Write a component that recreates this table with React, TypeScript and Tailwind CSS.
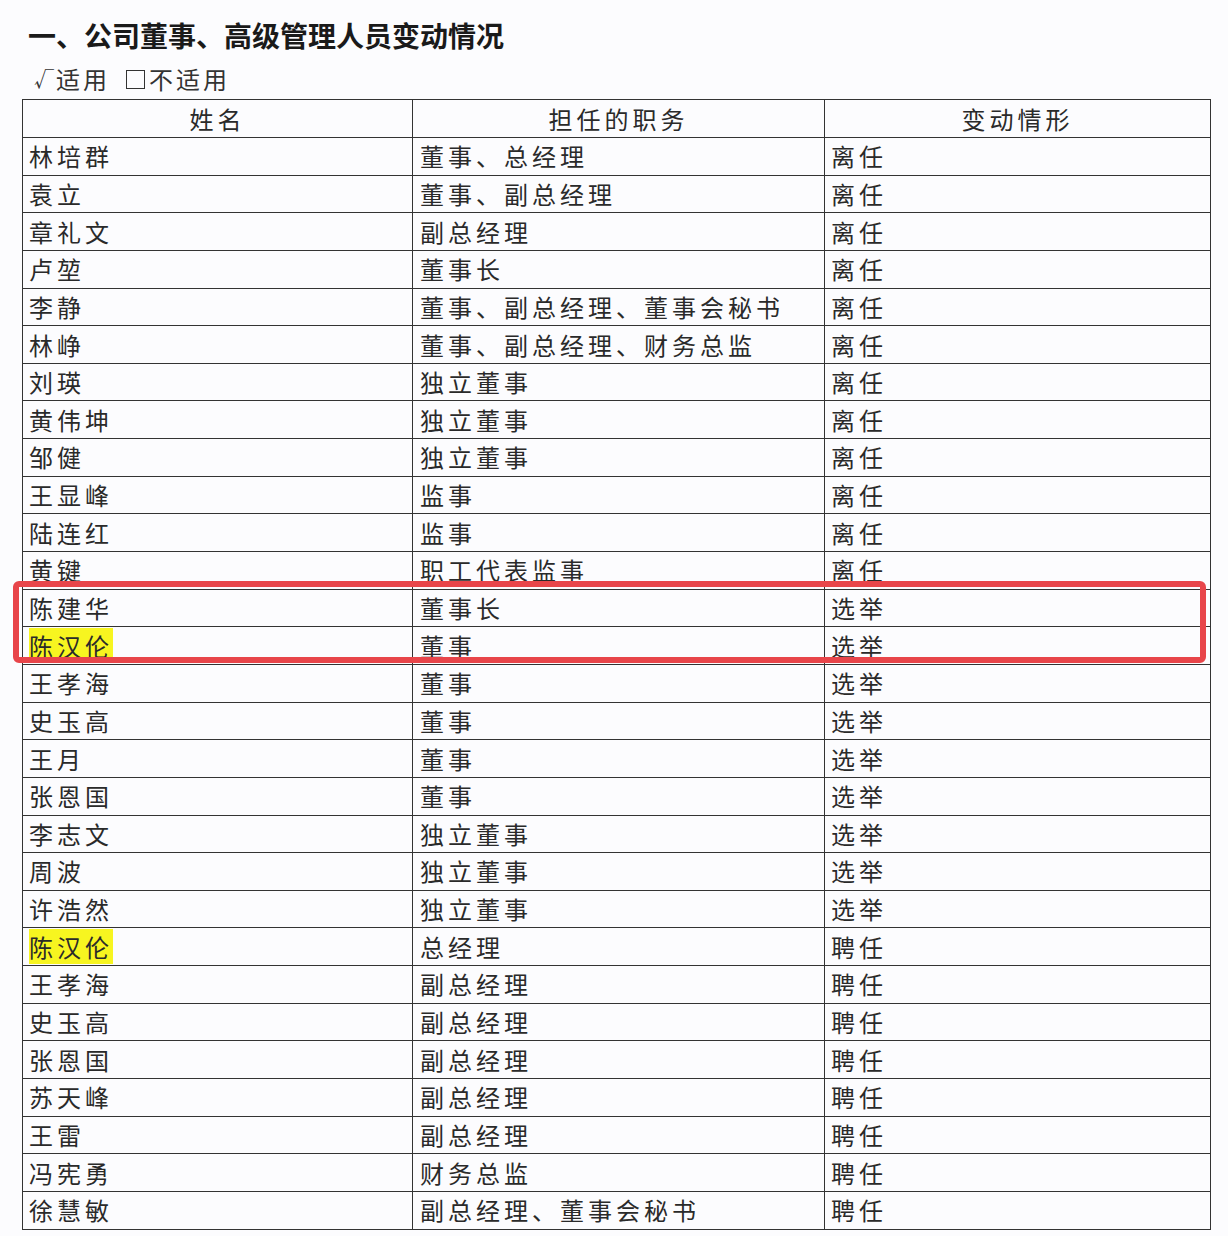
import React from "react";

const rows: [string, string, string][] = [
  ["林培群", "董事、总经理", "离任"],
  ["袁立", "董事、副总经理", "离任"],
  ["章礼文", "副总经理", "离任"],
  ["卢堃", "董事长", "离任"],
  ["李静", "董事、副总经理、董事会秘书", "离任"],
  ["林峥", "董事、副总经理、财务总监", "离任"],
  ["刘瑛", "独立董事", "离任"],
  ["黄伟坤", "独立董事", "离任"],
  ["邹健", "独立董事", "离任"],
  ["王显峰", "监事", "离任"],
  ["陆连红", "监事", "离任"],
  ["黄键", "职工代表监事", "离任"],
  ["陈建华", "董事长", "选举"],
  ["陈汉伦", "董事", "选举"],
  ["王孝海", "董事", "选举"],
  ["史玉高", "董事", "选举"],
  ["王月", "董事", "选举"],
  ["张恩国", "董事", "选举"],
  ["李志文", "独立董事", "选举"],
  ["周波", "独立董事", "选举"],
  ["许浩然", "独立董事", "选举"],
  ["陈汉伦", "总经理", "聘任"],
  ["王孝海", "副总经理", "聘任"],
  ["史玉高", "副总经理", "聘任"],
  ["张恩国", "副总经理", "聘任"],
  ["苏天峰", "副总经理", "聘任"],
  ["王雷", "副总经理", "聘任"],
  ["冯宪勇", "财务总监", "聘任"],
  ["徐慧敏", "副总经理、董事会秘书", "聘任"],
];

export default function App() {
  return (
    <main
      className="relative w-[1228px] h-[1236px] bg-[#fcfcfe] text-[#222] overflow-hidden"
      style={{ fontFamily: '"Noto Sans CJK SC", "Noto Sans", sans-serif' }}
    >
      {/* Heading */}
      <h1 className="pl-[28px] pt-[18px] text-[28px] leading-[34px] font-bold text-[#1a1a1a]">
        一、公司董事、高级管理人员变动情况
      </h1>
      <div className="mt-[11px] pl-[34px] text-[24px] leading-[32px] tracking-[3px] text-[#333] flex items-center">
        <span className="text-[20px] mr-[2px] tracking-normal">√</span>
        <span>适用</span>
        <span className="ml-[16px] inline-block w-[19px] h-[19px] border-[1.5px] border-[#333] mr-[4px]"></span>
        <span>不适用</span>
      </div>

      {/* Table */}
      <table className="ml-[22px] mt-[4px] w-[1188px] border-collapse table-fixed text-[24px] tracking-[4px] text-[#2a2a2a]">
        <colgroup>
          <col className="w-[390px]" />
          <col className="w-[412px]" />
          <col className="w-[386px]" />
        </colgroup>
        <thead>
          <tr className="h-[38px]">
            <th className="border border-[#333] font-normal text-center p-0 leading-none">姓名</th>
            <th className="border border-[#333] font-normal text-center p-0 leading-none">担任的职务</th>
            <th className="border border-[#333] font-normal text-center p-0 leading-none">变动情形</th>
          </tr>
        </thead>
        <tbody>
          {rows.map(([name, role, change], i) => {
            const hl = name === "陈汉伦";
            return (
              <tr key={i} className="h-[37.65px]">
                <td className="border border-[#333] pl-[6px] py-0 leading-none">
                  {hl ? <span className="bg-[#f7f520]">{name}</span> : name}
                </td>
                <td className="border border-[#333] pl-[7px] py-0 leading-none">{role}</td>
                <td className="border border-[#333] pl-[6px] py-0 leading-none">{change}</td>
              </tr>
            );
          })}
        </tbody>
      </table>

      {/* Red annotation box */}
      <div className="absolute left-[13px] top-[581px] w-[1193px] h-[82px] border-[6px] border-[#e8454a] rounded-[6px] pointer-events-none"></div>
    </main>
  );
}
